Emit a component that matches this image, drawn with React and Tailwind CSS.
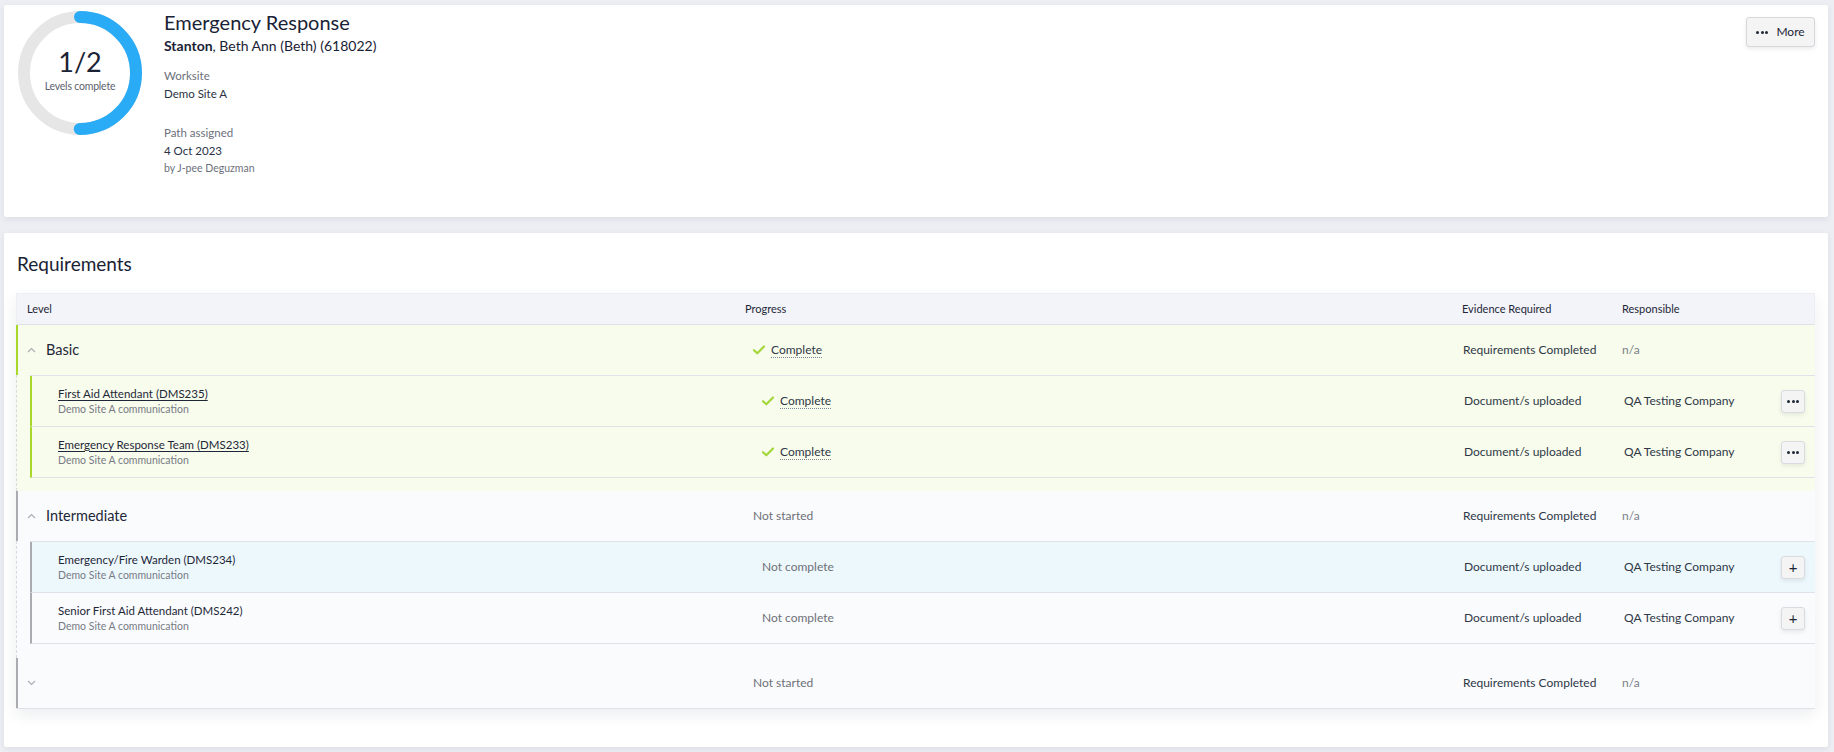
import React from "react";

const LIME = "border-[#a9d82a]";

function Check() {
  return (
    <svg width="12" height="10" viewBox="0 0 12 10" className="shrink-0">
      <path d="M1 5.2 L4.3 8.3 L11 1.5" fill="none" stroke="#a3d63a" strokeWidth="2.2" strokeLinecap="round" strokeLinejoin="round" />
    </svg>
  );
}

function Chevron({ up }) {
  return (
    <svg width="9" height="6" viewBox="0 0 9 6" className="shrink-0">
      <path d={up ? "M1 5 L4.5 1.5 L8 5" : "M1 1 L4.5 4.5 L8 1"} fill="none" stroke="#a8acb4" strokeWidth="1.1" />
    </svg>
  );
}

function Dots() {
  return (
    <span className="flex gap-[1.5px]">
      <span className="h-[3px] w-[3px] rounded-full bg-[#1d2738]" />
      <span className="h-[3px] w-[3px] rounded-full bg-[#1d2738]" />
      <span className="h-[3px] w-[3px] rounded-full bg-[#1d2738]" />
    </span>
  );
}

function Progress({ status }) {
  if (status === "Complete") {
    return (
      <span className="flex items-center gap-[6px]">
        <Check />
        <span className="border-b border-dotted border-[#7b8494] leading-[14px] text-[#2f3847]">Complete</span>
      </span>
    );
  }
  return <span className="text-[#6e7078]">{status}</span>;
}

function Donut() {
  const r = 56;
  const c = 2 * Math.PI * r;
  return (
    <div className="relative ml-[14px] mt-[6px] h-[124px] w-[124px] shrink-0">
      <svg width="124" height="124" viewBox="0 0 124 124">
        <circle cx="62" cy="62" r={r} fill="none" stroke="#e6e6e6" strokeWidth="12" />
        <circle
          cx="62"
          cy="62"
          r={r}
          fill="none"
          stroke="#2aabf6"
          strokeWidth="12"
          strokeLinecap="round"
          strokeDasharray={`${c / 2} ${c}`}
          transform="rotate(-90 62 62)"
        />
      </svg>
      <div className="absolute inset-0 flex flex-col items-center justify-center">
        <span className="mt-[-4px] text-[27px] leading-[30px] text-[#1a2235]">1/2</span>
        <span className="mt-[2px] text-[10.5px] tracking-[-0.2px] text-[#5d6270]">Levels complete</span>
      </div>
    </div>
  );
}

function GroupHeader({ name, up, status, accent }) {
  return (
    <div className={`flex h-[50px] items-center border-l-2 ${accent} text-[12px]`}>
      <div className="flex w-[727px] items-center gap-[10px] pl-[9px]">
        <Chevron up={up} />
        <span className="text-[14.5px] text-[#1d2738]">{name}</span>
      </div>
      <div className="w-[717px] pl-[8px]">
        <Progress status={status} />
      </div>
      <div className="w-[160px] pl-[1px] text-[#2f3847]">Requirements Completed</div>
      <div className="flex-1 text-[#7a7e88]">n/a</div>
    </div>
  );
}

function ChildRow({ name, link, status, action, highlight, accent }) {
  return (
    <div className={`flex h-[51px] items-center border-b border-l-2 border-b-[#dfe2e8] ${accent} text-[12px] ${highlight ? "bg-[#edf8fd]" : ""}`}>
      <div className="flex w-[722px] flex-col pl-[26px]">
        <span className={`text-[11.5px] leading-[16px] text-[#1d2738] ${link ? "underline underline-offset-2" : ""}`}>{name}</span>
        <span className="text-[10.5px] leading-[15px] text-[#777b85]">Demo Site A communication</span>
      </div>
      <div className="w-[710px] pl-[8px]">
        <Progress status={status} />
      </div>
      <div className="w-[160px] text-[#2f3847]">Document/s uploaded</div>
      <div className="flex-1 text-[#2f3847]">QA Testing Company</div>
      <button className="mr-[10px] flex h-[23px] w-[24px] items-center justify-center rounded-[3px] border border-[#d9dbe0] bg-[#f4f4f5] text-[15px] leading-none text-[#1d2738] shadow-[0_2px_4px_rgba(0,0,0,0.08)]">
        {action === "more" ? <Dots /> : "+"}
      </button>
    </div>
  );
}

export default function App() {
  return (
    <div className="h-[752px] overflow-hidden bg-[#eceef3] pl-[4px] pr-[6px] pt-[5px] [font-family:Lato,'Liberation_Sans',sans-serif]">
      <section className="flex h-[212px] rounded-[2px] bg-white shadow-[0_2px_6px_rgba(30,40,60,0.08)]">
        <Donut />
        <div className="ml-[22px] flex flex-1 flex-col pt-[4px]">
          <h1 className="text-[20px] leading-[26px] text-[#1a2235]">Emergency Response</h1>
          <p className="mt-[1px] text-[14px] leading-[20px] text-[#1a2235]">
            <span className="font-bold">Stanton</span>, Beth Ann (Beth) (618022)
          </p>
          <p className="mt-[11px] text-[11.5px] leading-[18px] text-[#6c707a]">Worksite</p>
          <p className="text-[11.5px] leading-[18px] text-[#2a3244]">Demo Site A</p>
          <p className="mt-[21px] text-[11.5px] leading-[18px] text-[#6c707a]">Path assigned</p>
          <p className="text-[11.5px] leading-[18px] text-[#2a3244]">4 Oct 2023</p>
          <p className="text-[10.5px] leading-[16px] text-[#6c707a]">by J-pee Deguzman</p>
        </div>
        <div className="pr-[13px] pt-[12px]">
          <button className="flex h-[30px] w-[69px] items-center justify-center gap-[8px] rounded-[3px] border border-[#d6d8dc] bg-[#f4f4f5] text-[12px] text-[#1d2738] shadow-[0_2px_4px_rgba(0,0,0,0.08)]">
            <Dots />
            <span>More</span>
          </button>
        </div>
      </section>

      <section className="mt-[16px] h-[514px] rounded-[2px] bg-white pl-[12px] pr-[13px] pt-[18px] shadow-[0_2px_6px_rgba(30,40,60,0.08)]">
        <h2 className="pl-[1px] text-[19px] leading-[26px] text-[#1a2235]">Requirements</h2>
        <div className="mt-[16px] shadow-[0_6px_14px_rgba(30,40,60,0.08)]">
          <div className="flex h-[32px] items-center border border-[#eceef3] border-b-[#dfe2e8] bg-[#f3f4f9] text-[11px] text-[#1d2738]">
            <div className="w-[728px] pl-[10px]">Level</div>
            <div className="w-[717px]">Progress</div>
            <div className="w-[160px]">Evidence Required</div>
            <div className="flex-1">Responsible</div>
          </div>

          <div className="bg-[#f8fcec]">
            <GroupHeader name="Basic" up status="Complete" accent={LIME} />
            <div className="border-l border-dashed border-[#d6d9de] pb-[13px]">
              <div className="ml-[13px] border-t border-[#dfe2e8]">
                <ChildRow name="First Aid Attendant (DMS235)" link status="Complete" action="more" accent={LIME} />
                <ChildRow name="Emergency Response Team (DMS233)" link status="Complete" action="more" accent={LIME} />
              </div>
            </div>
          </div>

          <div className="bg-[#fafbfd]">
            <GroupHeader name="Intermediate" up status="Not started" accent="border-[#a9abb0]" />
            <div className="border-l border-dashed border-[#d6d9de] pb-[14px]">
              <div className="ml-[13px] border-t border-[#dfe2e8]">
                <ChildRow name="Emergency/Fire Warden (DMS234)" status="Not complete" action="plus" highlight accent="border-[#a9abb0]" />
                <ChildRow name="Senior First Aid Attendant (DMS242)" status="Not complete" action="plus" accent="border-[#a9abb0]" />
              </div>
            </div>
          </div>

          <div className="border-b border-[#dfe2e8] bg-[#fafbfd]">
            <GroupHeader name="" status="Not started" accent="border-[#a9abb0]" />
          </div>
        </div>
      </section>
    </div>
  );
}
